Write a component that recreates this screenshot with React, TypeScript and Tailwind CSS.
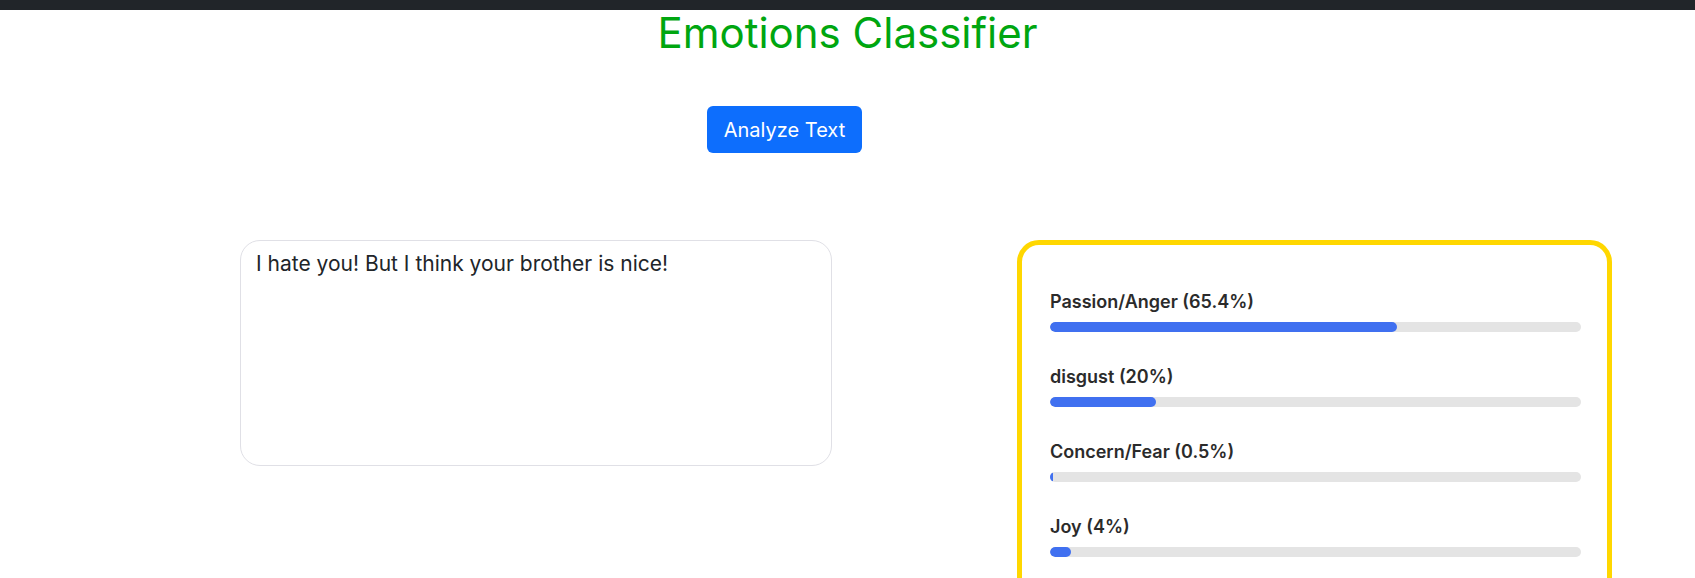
import { useState } from "react";

const EMOTIONS = [
  { label: "Passion/Anger", value: 65.4 },
  { label: "disgust", value: 20 },
  { label: "Concern/Fear", value: 0.5 },
  { label: "Joy", value: 4 },
];

export default function App() {
  const [text, setText] = useState("I hate you! But I think your brother is nice!");

  return (
    <div className="min-h-screen bg-white font-['Inter','Noto_Sans',sans-serif]">
      <div className="h-[10px] bg-[#212529]" />

      <h1 className="text-center text-[42px] leading-[41px] mt-[2px] text-[#00a610]">
        Emotions Classifier
      </h1>

      <div className="pl-[707px] mt-[53px]">
        <button className="h-[47px] w-[155px] rounded-[6px] bg-[#0d6efd] text-white text-[20px]">
          Analyze Text
        </button>
      </div>

      <div className="flex items-start pl-[240px] mt-[87px]">
        <textarea
          value={text}
          onChange={(e) => setText(e.target.value)}
          className="w-[592px] h-[226px] shrink-0 resize-none rounded-[20px] border border-[#e0e0e6] px-[15px] py-[7px] text-[21px] leading-[1.5] text-[#212529] outline-none"
        />

        <div className="ml-[185px] w-[595px] shrink-0 border-[5px] border-[#ffd700] rounded-[22px] pl-[28px] pr-[26px] pt-[45px] pb-[40px]">
          {EMOTIONS.map((e) => (
            <div key={e.label} className="mb-[33px]">
              <div className="text-[18px] leading-[24px] font-semibold text-[#2b2b2b]">
                {e.label} ({e.value}%)
              </div>
              <div className="mt-[8px] h-[10px] w-full rounded-full bg-[#e4e4e4] overflow-hidden">
                <div className="h-full rounded-full bg-[#4070f0]" style={{ width: `${e.value}%` }} />
              </div>
            </div>
          ))}
        </div>
      </div>
    </div>
  );
}
